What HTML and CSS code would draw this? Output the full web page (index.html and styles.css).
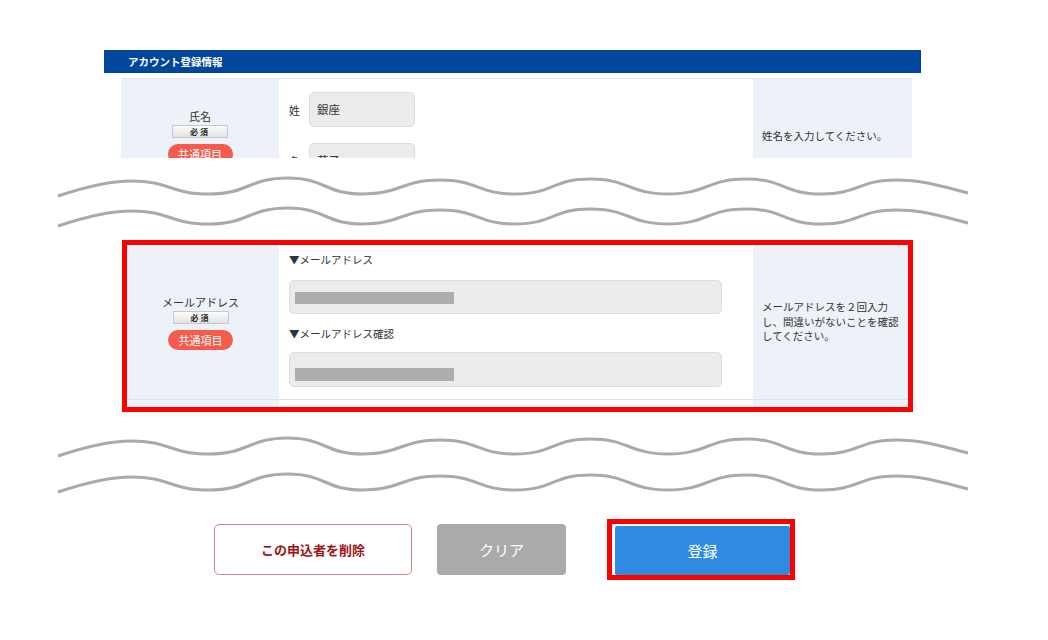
FILE: index.html
```html
<!DOCTYPE html>
<html lang="ja">
<head>
    <meta charset="UTF-8">
    <meta name="viewport" content="width=device-width, initial-scale=1.0">
    <title>アカウント登録情報</title>
    <link rel="stylesheet" href="styles.css">
</head>
<body>

    <div class="page">
        <div class="section-head">アカウント登録情報</div>

        <!-- first row, cut off by the wave break -->
        <div class="panel-clip">
            <div class="row row-name">
                <div class="cell cell-label">
                    <span class="label">氏名</span>
                    <span class="badge-req">必須</span>
                    <span class="badge-common">共通項目</span>
                </div>
                <div class="cell cell-input cell-name">
                    <div class="name-line">
                        <span class="name-key">姓</span>
                        <div class="field field-short">銀座</div>
                    </div>
                    <div class="name-line name-line-second">
                        <span class="name-key">名</span>
                        <div class="field field-short">花子</div>
                    </div>
                </div>
                <div class="cell cell-note">姓名を入力してください。</div>
            </div>
        </div>

        <svg class="wave wave-top" width="930" height="82" viewBox="0 0 930 82">
            <defs>
                <path id="waveLine" d="M8 38 C35 29 60 23 81 23 C120 23 120 36 159 36 C199 36 198 20 238 20 C275 20 275 36 312 36 C351 36 351 22 390 22 C428 22 428 36 465 36 C503 36 503 21 540 21 C579 21 579 36 618 36 C657 36 657 21 696 21 C734 21 734 36 771 36 C809 36 809 22 846 22 C875 22 898 30 918 35"/>
            </defs>
            <use href="#waveLine" class="wave-stroke"/>
            <use href="#waveLine" class="wave-stroke" transform="translate(0 30)"/>
        </svg>

        <div class="highlight highlight-row">
            <div class="row row-mail">
                <div class="cell cell-label cell-label-mail">
                    <span class="label">メールアドレス</span>
                    <span class="badge-req">必須</span>
                    <span class="badge-common">共通項目</span>
                </div>
                <div class="cell cell-input cell-mail">
                    <div class="mail-label">▼メールアドレス</div>
                    <div class="field field-long field-first"><span class="mask"></span></div>
                    <div class="mail-label mail-label-second">▼メールアドレス確認</div>
                    <div class="field field-long field-second"><span class="mask mask-low"></span></div>
                </div>
                <div class="cell cell-note cell-note-mail">メールアドレスを２回入力し、間違いがないことを確認してください。</div>
            </div>
            <div class="row row-next">
                <div class="cell cell-label cell-label-mail"></div>
                <div class="cell cell-input"></div>
                <div class="cell cell-note cell-note-mail"></div>
            </div>
        </div>

        <svg class="wave wave-bottom" width="930" height="107" viewBox="0 0 930 107">
            <use href="#waveLine" class="wave-stroke" transform="translate(0 6)"/>
            <use href="#waveLine" class="wave-stroke" transform="translate(0 42)"/>
        </svg>

        <div class="actions">
            <button type="button" class="btn btn-delete">この申込者を削除</button>
            <button type="button" class="btn btn-clear">クリア</button>
            <div class="highlight highlight-btn">
                <button type="button" class="btn btn-submit">登録</button>
            </div>
        </div>
    </div>

</body>
</html>
```

FILE: styles.css
```css
* {
    box-sizing: border-box;
}

body {
    margin: 0;
    background-color: #fff;
    font-family: "Noto Sans CJK JP", sans-serif;
    color: #333;
}

.page {
    padding-top: 50px;
}

.section-head {
    margin-left: 104px;
    width: 817px;
    height: 23px;
    padding-left: 24px;
    background-color: #00479b;
    color: #fff;
    font-size: 10.5px;
    font-weight: bold;
    line-height: 23px;
}

.panel-clip {
    margin: 5px 0 0 121px;
    width: 791px;
    height: 80px;
    overflow: hidden;
    border-top: 1px solid #e6e6e6;
}

.row {
    display: flex;
}

.row-name {
    height: 114px;
}

.cell-label {
    width: 158px;
    background-color: #edf1f8;
    display: flex;
    flex-direction: column;
    align-items: center;
    justify-content: center;
}

.cell-input {
    width: 474px;
    background-color: #fff;
}

.cell-note {
    width: 159px;
    padding: 0 12px 0 9px;
    background-color: #edf1f8;
    display: flex;
    align-items: center;
    font-size: 10.5px;
    line-height: 14.5px;
}

.label {
    font-size: 11px;
    line-height: 14px;
}

.badge-req {
    margin-top: 2px;
    width: 56px;
    height: 13px;
    border: 1px solid #c8c8c8;
    background: linear-gradient(#fdfdfd, #e2e2e2);
    font-size: 8px;
    font-weight: bold;
    line-height: 11px;
    letter-spacing: 2px;
    text-align: center;
    color: #222;
}

.badge-common {
    margin-top: 6px;
    width: 65px;
    height: 20px;
    border-radius: 10px;
    background-color: #f65b4b;
    color: #fff;
    font-size: 11px;
    line-height: 20px;
    text-align: center;
}

/* name inputs */
.cell-name {
    padding: 13px 0 0 10px;
}

.name-line {
    display: flex;
    align-items: center;
}

.name-line-second {
    margin-top: 16px;
}

.name-key {
    width: 10px;
    margin-right: 10px;
    font-size: 11px;
}

.field {
    background-color: #ececec;
    border: 1px solid #dcdcdc;
    border-radius: 5px;
}

.field-short {
    width: 106px;
    height: 35px;
    padding-left: 7px;
    font-size: 11.5px;
    line-height: 33px;
}

/* mail row, inside the red frame */
.highlight {
    border: 5px solid #ff0000;
}

.highlight-row {
    margin-left: 122px;
    width: 791px;
}

.row-mail {
    height: 155px;
    border-bottom: 1px solid #dfe2e8;
}

.cell-label-mail {
    width: 152px;
    padding-right: 5px;
}

.cell-note-mail {
    width: 155px;
    padding: 0 8px 0 9px;
}

.cell-mail {
    padding: 8px 31px 0 10px;
}

.mail-label {
    font-size: 10.5px;
    line-height: 14px;
}

.mail-label-second {
    margin-top: 13px;
}

.field-long {
    width: 433px;
}

.field-first {
    margin-top: 13px;
    height: 34px;
}

.field-second {
    margin-top: 11px;
    height: 35px;
}

.mask {
    display: block;
    width: 159px;
    height: 12px;
    margin: 11px 0 0 5px;
    background-color: #adadad;
}

.mask-low {
    margin-top: 15px;
    height: 13px;
}

.row-next {
    height: 7px;
}

/* wave breaks */
.wave {
    display: block;
    margin-left: 50px;
}

.wave-stroke {
    fill: none;
    stroke: #aaaaaa;
    stroke-width: 3;
}

/* buttons */
.actions {
    display: flex;
    align-items: center;
    height: 61px;
    padding-left: 214px;
}

.btn {
    font-family: "Noto Sans CJK JP", sans-serif;
    cursor: pointer;
}

.btn-delete {
    width: 198px;
    height: 51px;
    border: 1px solid #d38484;
    border-radius: 5px;
    background-color: #fff;
    color: #9e1414;
    font-size: 13px;
    font-weight: bold;
}

.btn-clear {
    margin-left: 25px;
    width: 129px;
    height: 51px;
    border: none;
    border-radius: 4px;
    background-color: #aaaaaa;
    color: #fff;
    font-size: 15px;
}

.highlight-btn {
    margin-left: 41px;
    width: 188px;
    height: 61px;
    padding: 2px 0 0 3px;
}

.btn-submit {
    width: 175px;
    height: 49px;
    border: none;
    border-radius: 2px;
    background-color: #308ae2;
    color: #fff;
    font-size: 15px;
}
```
